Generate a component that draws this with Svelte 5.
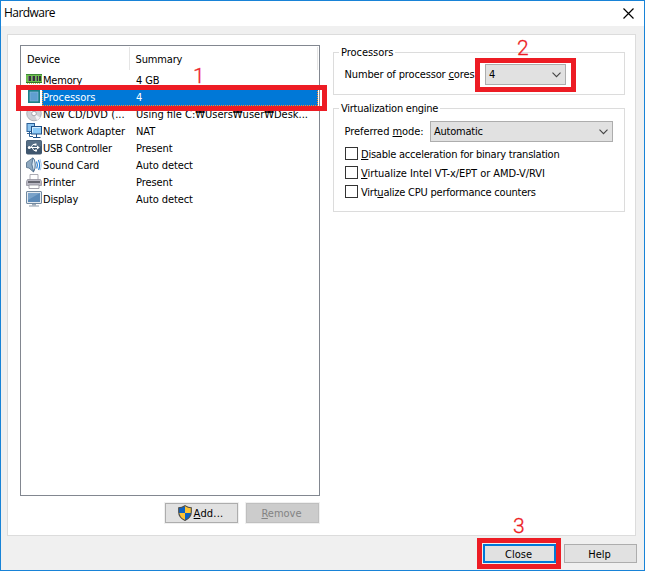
<script>
  const devices = [
    { icon: 'memory', name: 'Memory', summary: '4 GB', tight: -0.2 },
    { icon: 'cpu', name: 'Processors', summary: '4', tight: -0.05, selected: true },
    { icon: 'disc', name: 'New CD/DVD (...', summary: 'Using file C:₩Users₩user₩Desk...', tight: 0.06 },
    { icon: 'network', name: 'Network Adapter', summary: 'NAT', tight: -0.12 },
    { icon: 'usb', name: 'USB Controller', summary: 'Present', tight: -0.24 },
    { icon: 'sound', name: 'Sound Card', summary: 'Auto detect', tight: -0.12 },
    { icon: 'printer', name: 'Printer', summary: 'Present', tight: -0.1 },
    { icon: 'display', name: 'Display', summary: 'Auto detect', tight: -0.2 }
  ];
  const options = [
    { before: '', key: 'D', after: 'isable acceleration for binary translation', tight: -0.23 },
    { before: '', key: 'V', after: 'irtualize Intel VT-x/EPT or AMD-V/RVI', tight: -0.05 },
    { before: 'Virt', key: 'u', after: 'alize CPU performance counters', tight: -0.22 }
  ];
</script>

{#snippet chevron()}
  <svg class="chevron" width="9" height="6" viewBox="0 0 9 6"><path d="M.5.7 4.5 4.7 8.5.7" fill="none" stroke="#444" stroke-width="1.1" /></svg>
{/snippet}

{#snippet deviceIcon(kind)}
  <svg class="icon" width="16" height="16" viewBox="0 0 16 16">
    {#if kind === 'memory'}
      <rect x="0" y="2" width="16" height="9" fill="#6fbf4f" />
      <path d="M0 2.500h16" stroke="#3c8a35" />
      <path d="M2 4h3v5H2zM6 4h3v5H6zM10 4h2v5h-2zM13 4h2v5h-2z" fill="#34363c" />
      <path d="M2 4h1v5H2zM6 4h1v5H6zM10 4h1v5h-1z" fill="#74777c" />
      <path d="M0 10.500h16" stroke="#2c7a2c" />
      <path d="M1 11.500h14" stroke="#c9b64c" stroke-dasharray="1 1" />
    {:else if kind === 'cpu'}
      <rect x="2" y="1" width="12" height="13" fill="#1d7f88" />
      <rect x="4" y="3" width="8" height="9" fill="#5f9fd0" stroke="#8fc0e0" stroke-width=".6" />
    {:else if kind === 'disc'}
      <circle cx="8" cy="7.500" r="7.300" fill="#d0d1d6" stroke="#a3a4ac" stroke-width=".8" />
      <path d="M8 7.500 2 3.500A7 7 0 0 1 5 1ZM8 7.500l6 4a7 7 0 0 1-3 2.700Z" fill="#f4f4f6" />
      <circle cx="8" cy="7.500" r="2.300" fill="#fff" stroke="#9596a0" stroke-width=".8" />
    {:else if kind === 'network'}
      <rect x="1" y=".5" width="7.500" height="8" fill="#8cc4f0" stroke="#2b5f96" />
      <path d="M3.500 9v4.500H7M1 10.500h4" fill="none" stroke="#2b5f96" />
      <rect x="5.500" y="3.500" width="10" height="7.500" fill="#8ecbf8" stroke="#1f4f86" />
      <path d="M6.500 4.500h8M6.500 4.500v5" stroke="#d6eeff" fill="none" />
      <path d="M10.500 11v3M7 14.500h7.500" stroke="#1f4f86" />
    {:else if kind === 'usb'}
      <rect x="0" y="0" width="16" height="14.500" rx="1.800" fill="#3f566e" />
      <rect x=".5" y=".5" width="15" height="6" rx="1.500" fill="#566e86" />
      <path d="M3 7.500h8M5 7.500l2-3h2M6 7.500l2 3h2" fill="none" stroke="#fff" />
      <circle cx="3.300" cy="7.500" r="1.500" fill="#fff" /><path d="m11 5.500 2.800 2-2.800 2zM8.500 3.500h2v2h-2zM9 9.500h2v2H9z" fill="#fff" />
    {:else if kind === 'sound'}
      <path d="M.5 5.500 2.500 4 7 .8Q9 4 9 8t-1.500 7L3 11 .5 10.500Z" fill="#8fa9c0" stroke="#4d6a84" stroke-width=".8" />
      <path d="M7 1Q4.500 7 7.500 14.500 9.500 12 9.200 7T7 1Z" fill="#dbe9f4" stroke="#3f6285" stroke-width=".8" />
      <path d="M10.500 4.500q1.700 3.500.2 7M12.300 3q2.500 5 .3 10" fill="none" stroke="#2a7fd0" stroke-width="1.200" />
      <path d="M14 2.200q2.500 5.500.4 11" fill="none" stroke="#91bde8" stroke-width=".8" />
    {:else if kind === 'printer'}
      <path d="M4 .5h8v6H4z" fill="#fff" stroke="#a3a3ab" stroke-width=".9" />
      <path d="M1.500 5.500h13l1 2v4H.5v-4Z" fill="#b9b8c3" stroke="#93929e" stroke-width=".8" />
      <path d="M2 8h12" stroke="#4b4b55" stroke-width="1.500" />
      <path d="M3 11h10v3.500H3z" fill="#fff" stroke="#8b8a95" stroke-width=".8" />
    {:else}
      <rect x=".5" y=".5" width="15" height="12" rx=".5" fill="#e4eaf0" stroke="#7189a0" />
      <rect x="2" y="2" width="12" height="9" fill="#5c8ab8" />
      <path d="M2 2h12L2 9z" fill="#7aa2c9" />
      <path d="M6 13h4v1.500H6z" fill="#9ca9b7" /><path d="M3 15h10" stroke="#8797a8" />
    {/if}
  </svg>
{/snippet}

<div class="window">
  <header class="titlebar">
    <span>Hardware</span>
    <svg width="11" height="11" viewBox="0 0 11 11"><path d="m.5.5 10 10M10.500.5l-10 10" stroke="#000" stroke-width="1.200" /></svg>
  </header>

  <main class="panel">
    <section class="left">
      <div class="list">
        <div class="head"><span class="device">Device</span><span class="summary">Summary</span></div>
        {#each devices as d}
          <div class="row" class:selected={d.selected}>
            {@render deviceIcon(d.icon)}
            <div class="cells"><span class="name" style:letter-spacing="{d.tight}px">{d.name}</span><span class="value" class:path={d.icon === 'disc'}>{d.summary}</span></div>
          </div>
        {/each}
      </div>
      <div class="actions">
        <button class="halo">
          <svg width="14" height="16" viewBox="0 0 14 16">
            <path d="M7 .6Q4 2.700.7 2.700V7q0 5.500 6.300 8.500Q13.300 12.500 13.300 7V2.700Q10 2.700 7 .6Z" fill="#fcc435" />
            <path d="M7 1Q4 2.700.8 2.700V8H7ZM7 8h6.200Q12.500 12.800 7 15.300Z" fill="#0b62c4" />
            <path d="M7 .6Q4 2.700.7 2.700V7q0 5.500 6.300 8.500Q13.300 12.500 13.300 7V2.700Q10 2.700 7 .6Z" fill="none" stroke="#4b4b4b" stroke-width="1.100" />
          </svg><span class="add"><u>A</u>dd...</span>
        </button>
        <button class="halo disabled" disabled><span><u>R</u>emove</span></button>
      </div>
    </section>

    <section class="right">
      <div class="group cores">
        <div class="legend">Processors</div>
        <div class="field"><span class="cores-label">Number of processor <u>c</u>ores:</span><div class="combo small">4{@render chevron()}</div></div>
      </div>
      <div class="group engine">
        <div class="legend tight">Virtualization engine</div>
        <div class="field"><span class="mode-label">Preferred <u>m</u>ode:</span><div class="combo tight">Automatic{@render chevron()}</div></div>
        {#each options as o}
          <div class="check"><i></i><span style:letter-spacing="{o.tight}px">{o.before}<u>{o.key}</u>{o.after}</span></div>
        {/each}
      </div>
    </section>
  </main>

  <footer><button class="default">Close</button><button>Help</button></footer>

  <div class="mark m1"></div><div class="num n1">1</div>
  <div class="mark m2"></div><div class="num n2">2</div>
  <div class="mark m3"></div><div class="num n3">3</div>
</div>

<style>
  * { box-sizing: border-box; }
  .window { position: relative; display: flex; flex-direction: column; width: 645px; height: 571px; overflow: hidden; border: 1px solid #1883d7; background: #f0f0f0; color: #000; font: 11px/17px "DejaVu Sans Condensed", "DejaVu Sans", "Noto Sans CJK KR", sans-serif; font-stretch: condensed; white-space: nowrap; }
  .titlebar { display: flex; justify-content: space-between; height: 25px; padding: 3px 10px 0 3px; background: #fff; font: 12px/17px "Open Sans", sans-serif; letter-spacing: -0.55px; }
  .titlebar svg { margin-top: 4px; }
  .panel { display: flex; width: 629px; height: 502px; margin: 8px 0 0 6px; padding: 10px 10px 0 12px; background: #fff; border: 1px solid #dcdcdc; }
  .left { width: 300px; }
  .list { height: 451px; border: 1px solid #828790; }
  .head { display: flex; height: 26px; padding: 1px 1px 2px 0; line-height: 25px; letter-spacing: -0.15px; }
  .device { width: 109px; padding-left: 6px; border-right: 1px solid #e5e5e5; }
  .summary { flex: 1; padding-left: 5.500px; border-right: 1px solid #e5e5e5; }
  .row { display: flex; height: 17px; padding: 0 1px 0 5px; }
  .icon { flex: none; }
  .cells { display: flex; flex: 1; padding-left: 1px; }
  .name { width: 93px; }
  .value { letter-spacing: -0.08px; }
  .value.path { letter-spacing: 0; }
  .selected .cells { background: #0078d7; color: #fff; outline: 1px dotted #ff8728; outline-offset: -1px; }
  .actions { display: flex; justify-content: flex-end; gap: 8px; padding: 7px 1px 0 0; }
  button { display: flex; align-items: center; justify-content: center; width: 73px; height: 19px; padding: 0 2px 0 0; border: 1px solid #adadad; background: #e1e1e1; color: #000; font: inherit; }
  .halo { height: 20px; outline: 1px solid #f0f0f0; }
  .halo svg { margin-right: 2px; }
  .add { letter-spacing: 0.2px; }
  .halo.disabled { background: #ccc; border-color: #bfbfbf; color: #838383; }
  .right { width: 292px; margin-left: 13px; padding-top: 7px; }
  .group { border: 1px solid #dcdcdc; }
  .cores { height: 43px; }
  .engine { height: 104px; margin-top: 13px; }
  .legend { width: max-content; height: 17px; margin: -9px 0 0 5px; padding: 0 2px; background: #fff; letter-spacing: -0.05px; }
  .legend.tight, .combo.tight { letter-spacing: -0.24px; }
  .field { display: flex; align-items: center; height: 21px; margin: 3px 0 0 10px; }
  .engine .field { margin: 4px 0 5px 10px; }
  .cores-label { width: 141px; padding-left: .5px; letter-spacing: -0.14px; }
  .mode-label { width: 86px; padding-left: .5px; letter-spacing: -0.05px; }
  .combo { display: flex; align-items: center; justify-content: space-between; width: 183px; height: 21px; padding: 0 4px 0 3px; border: 1px solid #adadad; background: #e1e1e1; }
  .combo.small { width: 81px; }
  .check { display: flex; align-items: center; height: 13px; margin: 0 0 6px 11px; }
  .check i { width: 13px; height: 13px; margin-right: 3px; border: 1px solid #333; background: #fff; }
  .check span { padding-top: 2px; }
  u { text-decoration: underline; text-underline-offset: 1px; text-decoration-thickness: 1px; }
  footer { display: flex; justify-content: flex-end; gap: 8px; padding: 8px 7px 0 0; }
  footer button { padding-top: 2px; }
  .default { border: 2px solid #0078d7; }
  .mark { position: absolute; border: 5px solid #ed1c24; }
  .m1 { left: 15px; top: 84px; width: 311px; height: 26px; }
  .m2 { left: 474px; top: 57px; width: 101px; height: 34px; }
  .m3 { left: 476px; top: 537px; width: 84px; height: 31px; }
  .num { position: absolute; color: #ed1c24; font: 300 21px/22px Roboto, "Liberation Sans", sans-serif; -webkit-text-stroke: .3px #ed1c24; }
  .n1 { left: 192px; top: 64px; }
  .n2 { left: 516px; top: 36px; }
  .n3 { left: 512px; top: 514px; }
</style>
